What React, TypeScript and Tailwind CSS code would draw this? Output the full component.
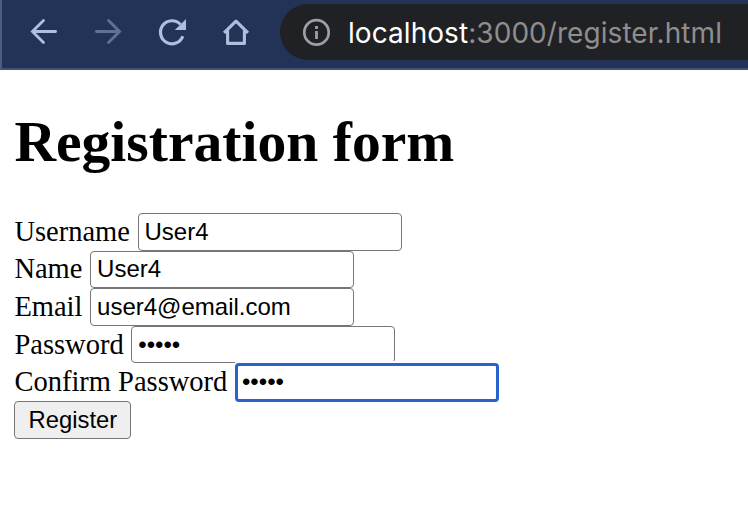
import React from "react";

function Toolbar() {
  return (
    <header className="flex h-[70px] items-start border-b-2 border-l-2 border-b-[#41527a] border-l-[#4d5d7b] bg-[#223357]">
      <svg className="h-[68px] w-[278px] shrink-0" viewBox="2 0 278 68" fill="none" strokeWidth="2.8">
        <path d="M55.600 31.500H33M43.500 20.400 32.400 31.500 43.500 42.600" stroke="#aebfdd" strokeLinecap="round" />
        <path d="M96.400 31.500H119M108.500 20.400 119.600 31.500 108.500 42.600" stroke="#5f7196" strokeLinecap="round" />
        <path d="M180.500 24.500A11.500 11.500 0 1 0 182.800 36.200" stroke="#aebfdd" strokeWidth="3.2" />
        <path d="M186 19V30H174.800L179.500 25.500Z" fill="#aebfdd" />
        <path d="M224 32.800 236 21.200 248 32.800M227.600 30.500V43.400H244.400V30.500" stroke="#aebfdd" strokeWidth="3.1" strokeLinejoin="round" />
      </svg>
      <div className="mt-1 flex h-14 grow items-center overflow-hidden rounded-l-full bg-[#202124] pl-[22px]">
        <svg className="h-7 w-7 shrink-0" viewBox="0 0 28 28" fill="none" stroke="#9aa0a6" strokeWidth="2.7">
          <circle cx="14.500" cy="14.400" r="12.200" />
          <path d="M14.500 13V21M14.500 8V11" strokeWidth="2.800" />
        </svg>
        <div className="ml-[18px] mt-[2px] whitespace-nowrap font-['Inter',sans-serif] text-[28px] leading-8 tracking-[0.06px] text-[#8e8e8f]">
          <span className="text-white">localhost</span>:3000/register.html
        </div>
      </div>
    </header>
  );
}

const fieldClass =
  "block w-[264px] rounded-[4px] bg-white font-['Liberation_Sans',Arial,sans-serif] text-[24px] leading-7 text-black outline-none";
const idleClass = "h-[37.6px] border border-[#767676] px-[6px]";
const focusClass = "relative mt-[1px] h-[38.4px] border-[3px] border-[#2a62cd] px-[4px] pb-[1px] shadow-[0_0_0_2px_white]";

function Field({ label, value, type = "text", focused = false }: { label: string; value: string; type?: string; focused?: boolean }) {
  return (
    <label className="flex h-[37.6px] items-center gap-[7.6px]">
      <span className="whitespace-nowrap leading-8">{label}</span>
      <input type={type} defaultValue={value} className={`${fieldClass} ${focused ? focusClass : idleClass}`} />
    </label>
  );
}

export default function App() {
  return (
    <div className="h-[532px] w-[748px] overflow-hidden bg-white text-black">
      <Toolbar />
      <main className="pl-[14.4px] pt-[40px] font-['Liberation_Serif','Times_New_Roman',serif] text-[28.5px]">
        <h1 className="h-[103px] text-[57.6px] font-bold leading-[64px]">Registration form</h1>
        <form>
          <Field label="Username" value="User4" />
          <Field label="Name" value="User4" />
          <Field label="Email" value="user4@email.com" />
          <Field label="Password" value="12345" type="password" />
          <Field label="Confirm Password" value="12345" type="password" focused />
          <button type="button" className="block h-[38px] w-[117px] rounded-[4px] border border-[#767676] bg-[#efefef] font-['Liberation_Sans',Arial,sans-serif] text-[23.8px] leading-7">
            Register
          </button>
        </form>
      </main>
    </div>
  );
}
